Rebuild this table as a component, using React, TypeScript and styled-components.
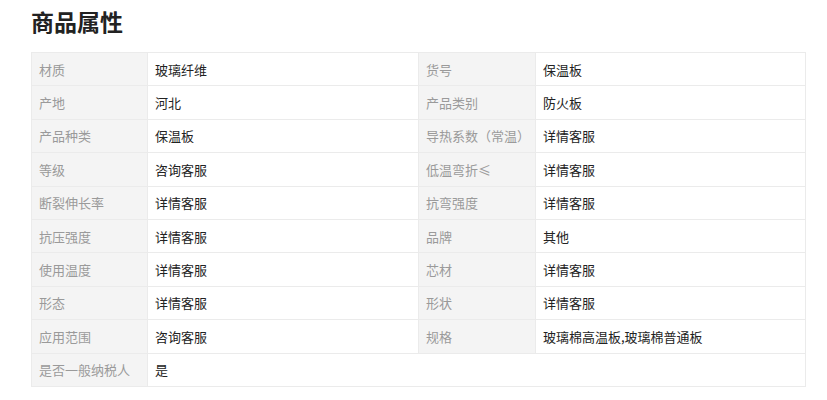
import React from 'react';

import styled, { createGlobalStyle } from 'styled-components';

const GlobalStyle = createGlobalStyle`
  body {
    margin: 0;
    background: #fff;
    font-family: "Noto Sans CJK SC", "Noto Sans", sans-serif;
  }
`;

const Section = styled.section`
  padding: 4px 21px 0 31px;
`;

const Title = styled.h2`
  margin: 0 0 14px;
  height: 34px;
  line-height: 34px;
  font-size: 23px;
  font-weight: 700;
  color: #222;
`;

const Grid = styled.div`
  display: grid;
  grid-template-columns: 116px 271px 117px 1fr;
  width: 775px;
  border-top: 1px solid #ebebeb;
  border-left: 1px solid #ebebeb;
  box-sizing: border-box;
`;

const Cell = styled.div<{ $label?: boolean; $span?: number }>`
  box-sizing: border-box;
  height: 33.4px;
  display: flex;
  align-items: center;
  padding: 0 7px;
  border-right: 1px solid #ebebeb;
  border-bottom: 1px solid #ebebeb;
  font-size: 13px;
  white-space: nowrap;
  background: ${(p) => (p.$label ? '#f4f4f4' : '#fff')};
  color: ${(p) => (p.$label ? '#9a9a9a' : '#222')};
  grid-column: span ${(p) => p.$span || 1};
`;

const rows: [string, string, string?, string?][] = [
  ['材质', '玻璃纤维', '货号', '保温板'],
  ['产地', '河北', '产品类别', '防火板'],
  ['产品种类', '保温板', '导热系数（常温）', '详情客服'],
  ['等级', '咨询客服', '低温弯折≤', '详情客服'],
  ['断裂伸长率', '详情客服', '抗弯强度', '详情客服'],
  ['抗压强度', '详情客服', '品牌', '其他'],
  ['使用温度', '详情客服', '芯材', '详情客服'],
  ['形态', '详情客服', '形状', '详情客服'],
  ['应用范围', '咨询客服', '规格', '玻璃棉高温板,玻璃棉普通板'],
  ['是否一般纳税人', '是'],
];

const App = () => (
  <>
    <GlobalStyle />
    <Section>
      <Title>商品属性</Title>
      <Grid>
        {rows.map(([k1, v1, k2, v2]) => (
          <React.Fragment key={k1}>
            <Cell $label>{k1}</Cell>
            <Cell $span={k2 ? 1 : 3}>{v1}</Cell>
            {k2 && <Cell $label>{k2}</Cell>}
            {k2 && <Cell>{v2}</Cell>}
          </React.Fragment>
        ))}
      </Grid>
    </Section>
  </>
);

export default App;
